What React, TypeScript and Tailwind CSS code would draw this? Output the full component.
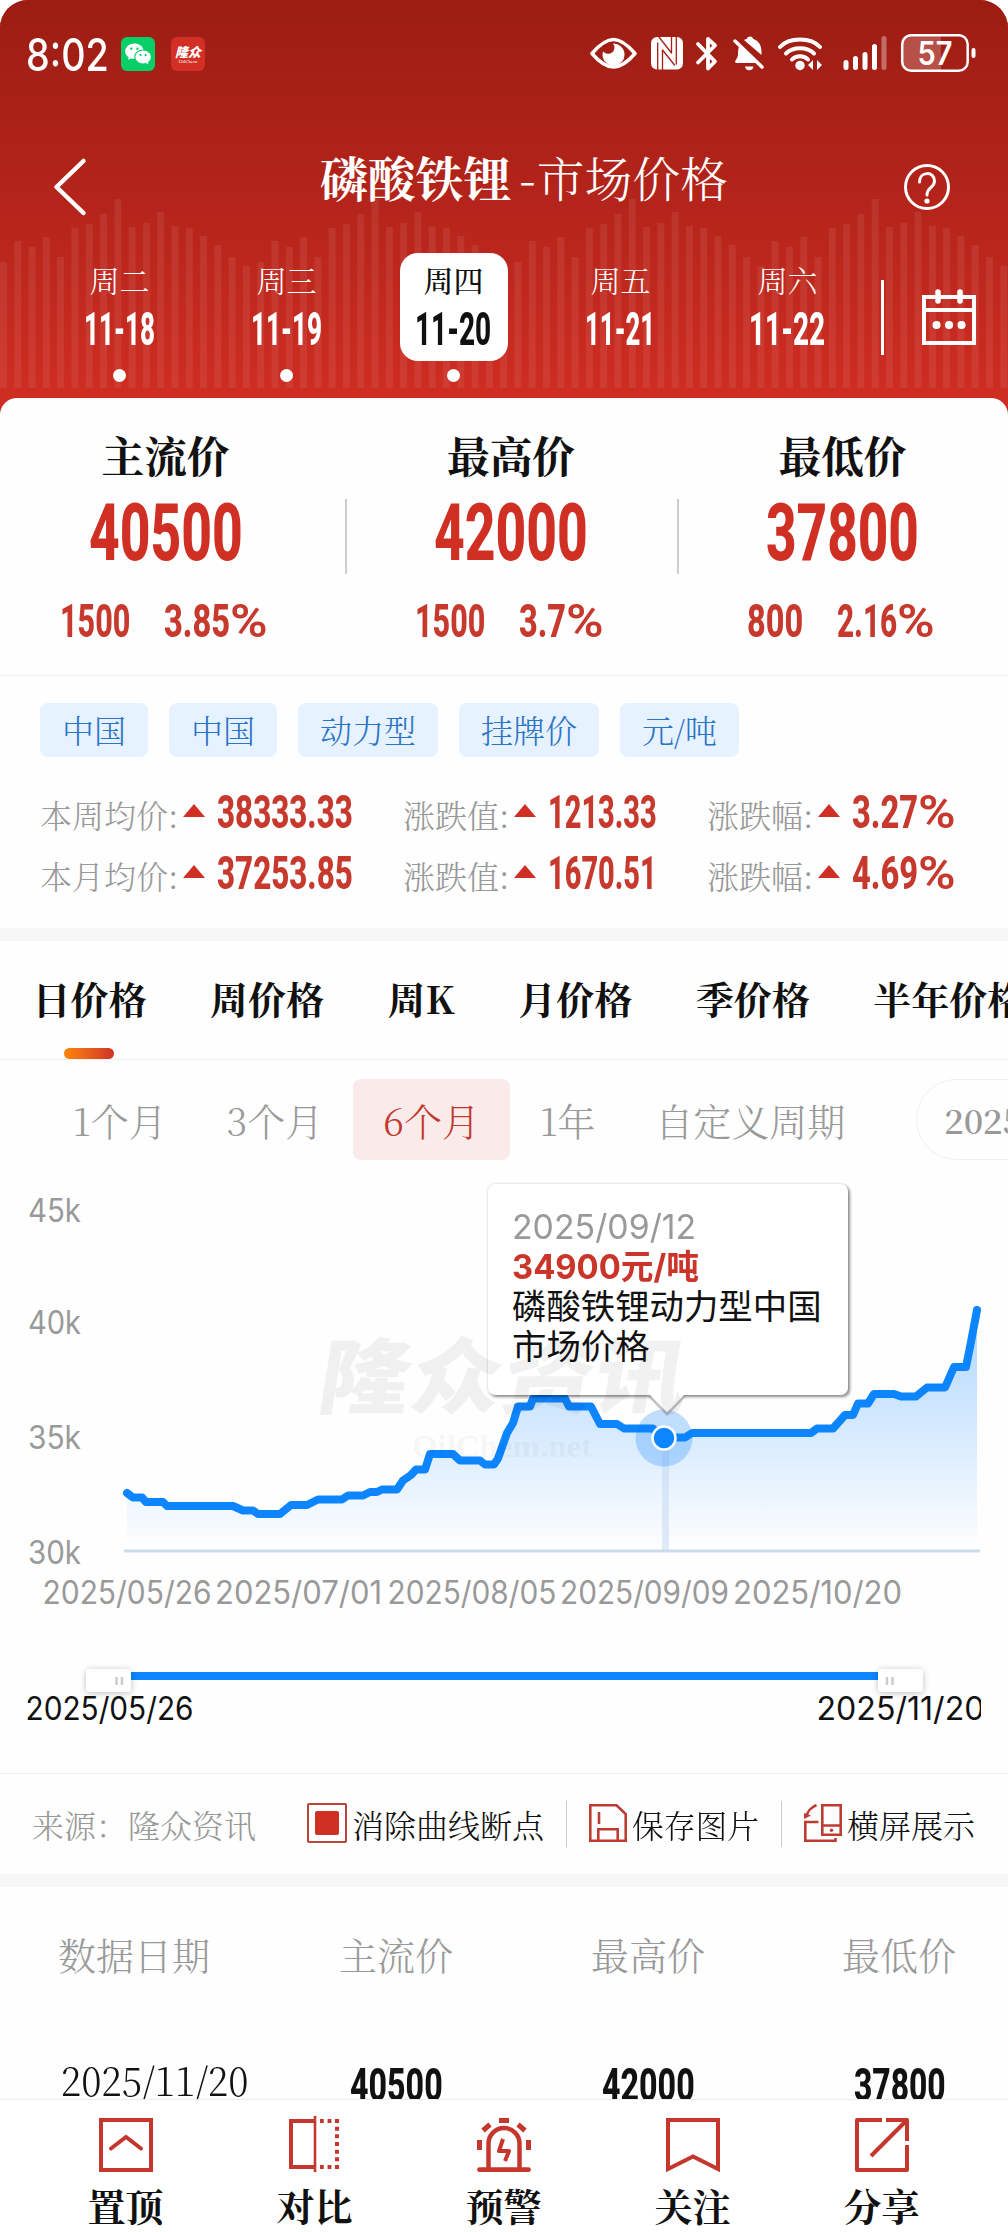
import { useLayoutEffect, useRef, useState, type ReactNode } from "react";
import { RiWechatFill } from "react-icons/ri";

const SERIF = "font-['Noto_Serif_CJK_SC','Noto_Serif_SC','Source_Han_Serif_SC','Liberation_Serif','Noto_Sans_CJK_SC',serif]";
const SANS = "font-['Inter','Noto_Sans_CJK_SC',sans-serif]";
const COND = "font-['Roboto','Liberation_Sans',sans-serif] font-extrabold leading-none";

/* One line of text squeezed horizontally so that it fills exactly `w` pixels. */
function Fit({ w, className = "", children }: { w: number; className?: string; children: ReactNode }) {
  const ref = useRef<HTMLSpanElement>(null);
  const [k, setK] = useState(1);
  useLayoutEffect(() => {
    if (ref.current) setK(w / ref.current.offsetWidth);
  }, [w]);
  return (
    <span className={`block shrink-0 ${className}`} style={{ width: w }}>
      <span ref={ref} className="inline-block origin-left whitespace-nowrap" style={{ transform: `scaleX(${k})` }}>
        {children}
      </span>
    </span>
  );
}

/* Condensed figure; a trailing percent sign is set wider and lighter than the digits. */
function Figure({ value, w, className = "" }: { value: string; w: number; className?: string }) {
  if (!value.endsWith("%")) return <Fit w={w} className={`${COND} ${className}`}>{value}</Fit>;
  return (
    <span className={`${COND} flex ${className}`}>
      <Fit w={w - 38}>{value.slice(0, -1)}</Fit>
      <Fit w={38} className="font-semibold">%</Fit>
    </span>
  );
}

const TILE = [262, 241, 247, 237, 257, 228, 224, 214, 199, 227, 223, 212, 226, 228, 236, 245, 257, 266];
const BARS = [...TILE, ...TILE, ...TILE, ...TILE.slice(1)];

function HeaderBars() {
  return (
    <svg className="absolute inset-0" width="1008" height="398">
      {BARS.map((y, i) => (
        <rect key={i} x={i * 14.29} y={y} width="7" height={388 - y} fill="#fff" fillOpacity="0.075" />
      ))}
    </svg>
  );
}

function StatusBar() {
  return (
    <div className="relative flex h-[108px] items-center pl-[26px] pr-[32px] text-white">
      <Fit w={83} className={`${SANS} text-[45px] font-medium leading-none`}>8:02</Fit>
      <div className="ml-3 flex size-[34px] items-center justify-center rounded-[6px] bg-[#07cf68]">
        <RiWechatFill className="size-[28px]" />
      </div>
      <div className="ml-4 flex size-[34px] flex-col items-center justify-center rounded-[6px] bg-[#d32f24]">
        <span className="whitespace-nowrap font-['Noto_Sans_CJK_SC',sans-serif] text-[13px] font-black italic leading-[15px]">隆众</span>
        <span className="font-['Liberation_Serif',serif] text-[5px] leading-[5px]">OilChem</span>
      </div>
      <svg className="ml-auto" width="390" height="40" viewBox="587 34 390 40" fill="none" stroke="#fff" strokeLinecap="round" strokeLinejoin="round">
        <path d="M593 53.500C602 43 608 39.500 614.500 39.500S627 43 636 53.500C627 64 621 67 614.500 67S602 64 593 53.500Z" strokeWidth="3.500" />
        <path d="M614 43.500a11 11 0 1 1-10.500 11c0-1 .2-2 .6-3a5.500 5.500 0 0 0 9.900-8Z" fill="#fff" stroke="none" />
        <rect x="652" y="37" width="32" height="32.500" rx="6" fill="#fff" stroke="none" />
        <path d="M658.700 70V43M663.500 70V50L675.500 65M660 37 672.500 53V37M677.300 37V64" stroke="#a42017" strokeWidth="1.300" />
        <path d="M700 43l17 17.500-7 7V38l7 6.500-17 17" transform="translate(-1 1)" strokeWidth="3.800" />
        <path d="M737 63h22L740.500 45.500c-1.500 3-1.500 7-1.500 9.500 0 3-3 5-3 7ZM745 40c1-.5 2-1 3-1.300.5-3 5.500-3 6 0 6 2 8.500 7 8.500 12.800V55ZM746 66.500h8.500a4.300 4.300 0 0 1-8.500 0Z" fill="#fff" stroke="none" />
        <path d="M736 41l27 26" strokeWidth="3.500" />
        <path d="M781 47c9-10 31-10 40 0M787 53.500c7-7 21-7 28 0M793 59.500c4-4.500 12-4.500 16 0" strokeWidth="4" />
        <circle cx="801" cy="65.500" r="4.700" fill="#fff" stroke="none" />
        <path d="M814 60v10l-5-5ZM818 60v10l5-5Z" fill="#fff" stroke="none" />
        <path d="M847 62.500v5M856.500 58.500v9M866 54.500v13M875.500 46.500v21" strokeWidth="5" />
        <path d="M885 38.500v29" strokeWidth="5" strokeOpacity=".35" />
        <path d="M910 36h32v34h-32a8 8 0 0 1-8-8V44a8 8 0 0 1 8-8Z" fill="#fff" fillOpacity=".22" stroke="none" />
        <rect x="903.200" y="35.200" width="65.500" height="35.600" rx="9" strokeWidth="2.500" />
        <path d="M974.500 50v6" strokeWidth="4" />
        <text x="936" y="64.500" textAnchor="middle" fontFamily="Inter" fontSize="33" fontWeight="600" fill="#fff" stroke="none" textLength="35" lengthAdjust="spacingAndGlyphs">57</text>
      </svg>
    </div>
  );
}

const DAYS = [
  { day: "周二", date: "11-18", w: 71, dot: true },
  { day: "周三", date: "11-19", w: 71, dot: true },
  { day: "周四", date: "11-20", w: 76, dot: true, on: true },
  { day: "周五", date: "11-21", w: 70 },
  { day: "周六", date: "11-22", w: 76 },
];

function Header() {
  return (
    <header className="relative h-[398px] bg-linear-to-b from-[#9c1d13] via-[#b4241a] to-[#cf2d22]">
      <HeaderBars />
      <StatusBar />
      <div className="relative flex h-[145px] items-start pl-[52px] pr-[57px] pt-[44px] text-white">
        <svg className="mt-[4px]" width="36" height="62" viewBox="0 0 36 62" fill="none" stroke="#fff" strokeWidth="4.500" strokeLinecap="round" strokeLinejoin="round">
          <path d="M31.500 5 4.500 31l27 26" />
        </svg>
        <h1 className="ml-[232px] mt-[-3px] flex flex-1 whitespace-nowrap text-[47.800px] leading-[56px]">
          <span className="font-bold">磷酸铁锂</span>
          <span className="ml-[8px] mr-[1px]">-</span>
          <span className="font-light">市场价格</span>
        </h1>
        <svg className="mt-[11px]" width="48" height="48" viewBox="0 0 48 48" fill="none" stroke="#fff" strokeWidth="3" strokeLinecap="round">
          <circle cx="24" cy="24" r="21.500" />
          <path d="M16.500 19c0-11 15-11 15-1 0 7-7.500 6-7.500 14" />
          <circle cx="24" cy="38" r="2.600" fill="#fff" stroke="none" />
        </svg>
      </div>
      <div className="relative flex h-[145px] pl-[36px] text-white">
        {DAYS.map((d) => (
          <div key={d.date} className="flex w-[167px] flex-col items-center">
            <div className={`flex h-[108px] w-[108px] flex-col items-center rounded-[18px] ${d.on ? "bg-white text-[#111]" : ""}`}>
              <span className={`mt-[8px] text-[30px] leading-[36px] ${d.on ? "font-medium" : "font-light"}`}>{d.day}</span>
              <Fit w={d.w} className={`${COND} ml-[-1px] mt-[8px] text-[47px]`}>{d.date}</Fit>
            </div>
            {d.dot && <i className="mt-[8px] size-[13px] rounded-full bg-white" />}
          </div>
        ))}
        <i className="ml-[10px] mt-[27px] h-[75px] w-[3px] bg-white" />
        <svg className="ml-[38px] mt-[36px]" width="54" height="56" viewBox="0 0 54 56" fill="none" stroke="#fff" strokeWidth="4">
          <path d="M2 8h50v46H2ZM2 21h50" />
          <path d="M16 3v9M38 3v9" strokeWidth="5.500" strokeLinecap="round" />
          <path d="M14.500 36h.1M27 36h.1M39.500 36h.1" strokeWidth="8" strokeLinecap="round" />
        </svg>
      </div>
    </header>
  );
}

const PRICES = [
  { name: "主流价", value: "40500", w: 154, diff: "1500", dw: 70, pct: "3.85%", pw: 104 },
  { name: "最高价", value: "42000", w: 154, diff: "1500", dw: 70, pct: "3.7%", pw: 85 },
  { name: "最低价", value: "37800", w: 153, diff: "800", dw: 56, pct: "2.16%", pw: 98 },
];

function Prices() {
  return (
    <section className="grid h-[278px] grid-cols-[347px_332px_329px] border-b border-[#f0f0f0]">
      {PRICES.map((p, i) => (
        <div key={p.name} className="flex items-start">
          <div className={`flex flex-1 flex-col items-center ${i === 0 ? "pr-[14px]" : "pr-[2px]"}`}>
            <span className="mt-[29px] text-[42.700px] font-bold leading-[56px] text-[#111]">{p.name}</span>
            <Fit w={p.w} className={`${COND} mt-[11px] text-[79px] text-[#d03024]`}>{p.value}</Fit>
            <div className="mt-[24px] flex gap-[34px] pr-[3px] text-[47px] text-[#c7382d]">
              <Figure value={p.diff} w={p.dw} />
              <Figure value={p.pct} w={p.pw} />
            </div>
          </div>
          {i < 2 && <i className="mt-[101px] h-[75px] w-[2px] bg-[#ccc]" />}
        </div>
      ))}
    </section>
  );
}

function Stat({ label, value, w, cls }: { label: string; value: string; w: number; cls: string }) {
  return (
    <div className={`flex items-center ${cls}`}>
      <Fit w={label.length === 5 ? 138 : 106} className="mt-[4px] text-[32px] font-light leading-[40px] text-[#999]">{label}</Fit>
      <svg className="ml-[5px] mt-[-2px]" width="22" height="13"><path d="M0 13 11 0l11 13Z" fill="#d03024" /></svg>
      <Figure value={value} w={w} className="ml-[12px] text-[47px] text-[#c7382d]" />
    </div>
  );
}

function Summary() {
  return (
    <section className="h-[252px] pl-[40px] pt-[27px]">
      <div className="flex gap-[21px]">
        {["中国", "中国", "动力型", "挂牌价", "元/吨"].map((t, i) => (
          <span key={i} className="flex h-[54px] items-center rounded-[8px] bg-[#e6f2ff] px-[22px] pb-[3px] text-[32px] font-light leading-none text-[#2c74c4]">
            {t}
          </span>
        ))}
      </div>
      <div className="mt-[24px] flex flex-col">
        <div className="flex h-[61px] items-center">
          <Stat cls="w-[363px]" label="本周均价:" value="38333.33" w={136} />
          <Stat cls="w-[304px]" label="涨跌值:" value="1213.33" w={109} />
          <Stat cls="" label="涨跌幅:" value="3.27%" w={104} />
        </div>
        <div className="flex h-[61px] items-center">
          <Stat cls="w-[363px]" label="本月均价:" value="37253.85" w={136} />
          <Stat cls="w-[304px]" label="涨跌值:" value="1670.51" w={109} />
          <Stat cls="" label="涨跌幅:" value="4.69%" w={104} />
        </div>
      </div>
    </section>
  );
}

function Tabs() {
  return (
    <nav className="relative flex h-[119px] gap-[63.500px] overflow-hidden border-b border-[#f0f0f0] pl-[32.500px] pt-[32px] text-[38px] font-bold leading-[50px] text-[#111]">
      {["日价格", "周价格", "周K", "月价格", "季价格", "半年价格"].map((t) => (
        <span key={t} className="shrink-0 whitespace-nowrap">{t}</span>
      ))}
      <i className="absolute bottom-0 left-[64px] h-[11px] w-[50px] rounded-full bg-linear-to-r from-[#fd8503] to-[#cf3024]" />
    </nav>
  );
}

function Periods() {
  return (
    <div className="flex h-[110px] items-center overflow-hidden pl-[43px] pt-[9px] text-[38px] font-light text-[#999]">
      {["1个月", "3个月", "6个月", "1年", "自定义周期"].map((t) => (
        <span
          key={t}
          className={`flex h-[81px] shrink-0 items-center whitespace-nowrap rounded-[8px] px-[29.850px] leading-none ${t === "6个月" ? "bg-[#faeaea] text-[#c0392e]" : ""}`}
        >
          {t}
        </span>
      ))}
      <span className="ml-[41px] flex h-[81px] shrink-0 items-center rounded-full border border-[#eee] pl-[27px] pr-10 text-[34px] font-semibold leading-none">
        2025
      </span>
    </div>
  );
}

const LINE =
  "M127 323L133 327.500H142L146 332H163L167 336H233L243 340.500H253L258 344H280L291 335H307L318 329.500H342L348 325.500H363L370 322H377L382 319.500H397L403 310.500L411 305L416 299.500H425L430 284H453L460 290.500H480L485 294.500H494L498 288.500L507 263L513 253L518 236.500H530L533 228.500H565L569 236.500H591L600 254H617L624 258.500H653L660 267.500H685L692 263H811L817 258.500H833L845 245H853L858 233.500H868L874 224H894L901 226.500H916L927 217.500H945L954 197H966L971 172L977 140";

const X_TICKS = [
  { t: "2025/05/26", x: 42.5, w: 169 },
  { t: "2025/07/01", x: 215, w: 167 },
  { t: "2025/08/05", x: 387.5, w: 169 },
  { t: "2025/09/09", x: 560, w: 169 },
  { t: "2025/10/20", x: 733, w: 169 },
];

function Chart() {
  return (
    <section className="relative h-[603px]">
      <svg width="1008" height="603" viewBox="0 0 1008 603" fontFamily="Inter" fontSize="32">
        <defs>
          <linearGradient id="area" x1="0" x2="0" y1="140" y2="380" gradientUnits="userSpaceOnUse">
            <stop offset="0" stopColor="#0d85ff" stopOpacity=".33" />
            <stop offset="1" stopColor="#0d85ff" stopOpacity="0" />
          </linearGradient>
          <clipPath id="clip"><rect x="0" y="500" width="981" height="80" /></clipPath>
          <filter id="soft" x="-30%" y="-60%" width="160%" height="220%"><feDropShadow dx="0" dy="1" stdDeviation="3" floodOpacity=".25" /></filter>
        </defs>
        <g fill="#999">
          {["45k", "40k", "35k", "30k"].map((t, i) => (
            <text key={t} x="28" y={[52, 163.500, 278.500, 393.500][i]} textLength="53" lengthAdjust="spacingAndGlyphs">{t}</text>
          ))}
          {X_TICKS.map((k) => (
            <text key={k.t} x={k.x} y="433.500" textLength={k.w} lengthAdjust="spacingAndGlyphs">{k.t}</text>
          ))}
        </g>
        <path d={`${LINE}V380H127Z`} fill="url(#area)" />
        <path d="M124 381H980" stroke="#ccdaeb" strokeWidth="3" />
        <rect x="662" y="268" width="7" height="112" fill="#c3d6f2" fillOpacity=".5" />
        <path d={LINE} fill="none" stroke="#0d85ff" strokeWidth="8" strokeLinecap="round" strokeLinejoin="round" />
        <circle cx="664" cy="268" r="28.500" fill="#0d85ff" fillOpacity=".26" />
        <circle cx="664" cy="268" r="11.500" fill="#0d85ff" stroke="#fff" strokeWidth="2.500" />
        <path d="M131 506H878" stroke="#0d85ff" strokeWidth="8" />
        <g fill="#fff" filter="url(#soft)">
          <rect x="86" y="499" width="45" height="23" rx="4" />
          <rect x="878" y="499" width="45" height="23" rx="4" />
        </g>
        <path d="M116.500 507v8M122 507v8M887 507v8M892.500 507v8" stroke="#ccc" strokeWidth="2.500" />
        <g fill="#111" clipPath="url(#clip)">
          <text x="25.500" y="550" textLength="168" lengthAdjust="spacingAndGlyphs">2025/05/26</text>
          <text x="816.500" y="550" textLength="168" lengthAdjust="spacingAndGlyphs">2025/11/20</text>
        </g>
      </svg>
      <div className={`absolute left-[488px] top-[14px] h-[211px] w-[360px] rounded-[7px] bg-white pl-[24px] pt-[23px] text-[34.400px] leading-[40px] text-[#111] shadow-[2px_2px_3px_rgba(0,0,0,0.42),0_0_3px_rgba(0,0,0,0.18)] ${SANS}`}>
        <div className="flex h-[40px] items-center">
          <Fit w={184} className="text-[34px] leading-[40px] text-[#999]">2025/09/12</Fit>
        </div>
        <div className="flex h-[40px] items-center text-[34px] font-bold text-[#cb3429]">
          <Fit w={187}>34900元/吨</Fit>
        </div>
        <div className="whitespace-nowrap">磷酸铁锂动力型中国</div>
        <div>市场价格</div>
      </div>
      <svg className="absolute left-[644px] top-[222px]" width="46" height="28" viewBox="0 0 46 28">
        <path d="M5 3.500 23 22 41 3.500" fill="none" stroke="#999" strokeOpacity=".6" strokeWidth="3" />
        <path d="M3 0H43L40 3 23 20 6 3Z" fill="#fff" />
      </svg>
      <svg className="pointer-events-none absolute left-[310px] top-[155px]" width="400" height="145" viewBox="0 0 400 145" fill="#000">
        <text x="6" y="82" transform="skewX(-9) translate(12 0)" fontFamily="Noto Sans CJK SC" fontWeight="900" fontSize="82" textLength="368" lengthAdjust="spacingAndGlyphs" fillOpacity=".055">隆众资讯</text>
        <text x="102" y="131.500" fontFamily="Liberation Serif" fontWeight="700" fontSize="31" textLength="180" lengthAdjust="spacingAndGlyphs" fillOpacity=".05">OilChem.net</text>
      </svg>
    </section>
  );
}

function SourceRow() {
  return (
    <section className="flex h-[101px] items-center border-t border-[#f0f0f0] pl-[32px] text-[32px] font-light leading-[40px] text-[#111]">
      <span className="w-[275px] whitespace-nowrap text-[#999]">来源：隆众资讯</span>
      <span className="mt-[-2px] flex size-[40px] shrink-0 items-center justify-center rounded-[2px] border-[2.500px] border-[#b8443a]">
        <i className="size-[24px] rounded-[2px] bg-[#d03024]" />
      </span>
      <Fit w={192} className="ml-[5px]">消除曲线断点</Fit>
      <i className="ml-[22px] h-[46px] w-px bg-[#ccc]" />
      <svg className="ml-[22px] mt-[-2px]" width="38" height="38" viewBox="0 0 38 38" fill="none" stroke="#bd3c32" strokeWidth="2.600">
        <path d="M1.300 1.300H27.500L36.700 10V36.700H1.300ZM9.300 36V25.300H28.700V36M10 8V20" />
      </svg>
      <Fit w={127} className="ml-[5px]">保存图片</Fit>
      <i className="ml-[22px] h-[46px] w-px bg-[#ccc]" />
      <svg className="ml-[22px] mt-[-2px]" width="38" height="38" viewBox="0 0 38 38" fill="none" stroke="#bd3c32" strokeWidth="2.600">
        <path d="M18.300 1.300H36.700V30.700H18.300ZM18.300 21.500H36.700M14.500 18H1.300V36.700H31.500V34M12.500 1C6 4 4 7 2.500 12" />
        <path d="M0 9l7 2.500L0 15Z" fill="#bd3c32" stroke="none" />
        <circle cx="27.500" cy="26.300" r="1.700" fill="#bd3c32" stroke="none" />
      </svg>
      <Fit w={128} className="ml-[5px]">横屏展示</Fit>
    </section>
  );
}

function Table() {
  return (
    <section className="h-[212px] overflow-hidden text-[38px] font-light leading-[50px]">
      <div className="flex pl-[18px] pt-[42px] text-[#999]">
        <span className="w-[252px] pl-[40px]">数据日期</span>
        <span className="w-[252px] text-center">主流价</span>
        <span className="w-[252px] text-center">最高价</span>
        <span className="w-[234px] pl-[68px]">最低价</span>
      </div>
      <div className="flex items-start pt-[77px] text-[#111]">
        <Fit w={187} className="-mt-[2px] ml-[61px] text-[40px]">2025/11/20</Fit>
        <Fit w={93} className={`${COND} ml-[102px] mt-[5px] text-[47px]`}>40500</Fit>
        <Fit w={93} className={`${COND} ml-[159px] mt-[5px] text-[47px]`}>42000</Fit>
        <Fit w={92} className={`${COND} ml-[159px] mt-[5px] text-[47px]`}>37800</Fit>
      </div>
    </section>
  );
}

const ACTIONS: { label: string; icon: ReactNode }[] = [
  { label: "置顶", icon: <path d="M2 2H52V52H2ZM12 30.500 27 19l15 11.500" strokeLinecap="round" /> },
  {
    label: "对比",
    icon: (
      <>
        <path d="M28 3H3V49H28" />
        <path d="M27 -2V54" strokeWidth="2.600" />
        <path d="M32 3H51M32 49H51" strokeDasharray="3.800 3.800" />
        <path d="M49 1V51" strokeDasharray="4 3.670" />
      </>
    ),
  },
  {
    label: "预警",
    icon: (
      <>
        <path d="M11.500 51V25.500a15.500 15.500 0 0 1 31 0V51" strokeWidth="4.500" />
        <path d="M2.500 51.700H51.500" strokeWidth="4.800" strokeLinecap="round" />
        <path d="M22 2.500H32M6 12.500 13 6.500M48 12.500 41 6.500M2.500 22V32M51.500 22V32" strokeWidth="5" />
        <path d="M26 21 22 33H32L28 43" strokeWidth="4" strokeLinejoin="round" />
      </>
    ),
  },
  { label: "关注", icon: <path d="M2 2H52V51L27 38.500 2 51Z" /> },
  { label: "分享", icon: <path d="M27 2H2V52H52V27M31 2H52V23M51 3 16 38" strokeLinejoin="round" /> },
];

function BottomNav() {
  return (
    <nav className="flex h-[133px] border-t border-[#ececec] bg-white pl-[31px] pr-[32px]">
      {ACTIONS.map((a) => (
        <div key={a.label} className="flex flex-1 flex-col items-center pt-[18px]">
          <svg className="overflow-visible" width="54" height="54" viewBox="0 0 54 54" fill="none" stroke="#c5372c" strokeWidth="4">
            {a.icon}
          </svg>
          <span className="mt-[8px] text-[38px] font-bold leading-[50px] text-[#111]">{a.label}</span>
        </div>
      ))}
    </nav>
  );
}

export default function App() {
  return (
    <div className={`h-[2232px] w-[1008px] overflow-hidden rounded-t-[28px] bg-[#cf2d22] ${SERIF}`}>
      <Header />
      <main className="rounded-t-[17px] bg-[#fefefe]">
        <Prices />
        <Summary />
        <div className="h-[13px] bg-[#f7f7f7]" />
        <Tabs />
        <Periods />
        <Chart />
        <SourceRow />
        <div className="h-[13px] bg-[#f7f7f7]" />
        <Table />
        <BottomNav />
      </main>
    </div>
  );
}
